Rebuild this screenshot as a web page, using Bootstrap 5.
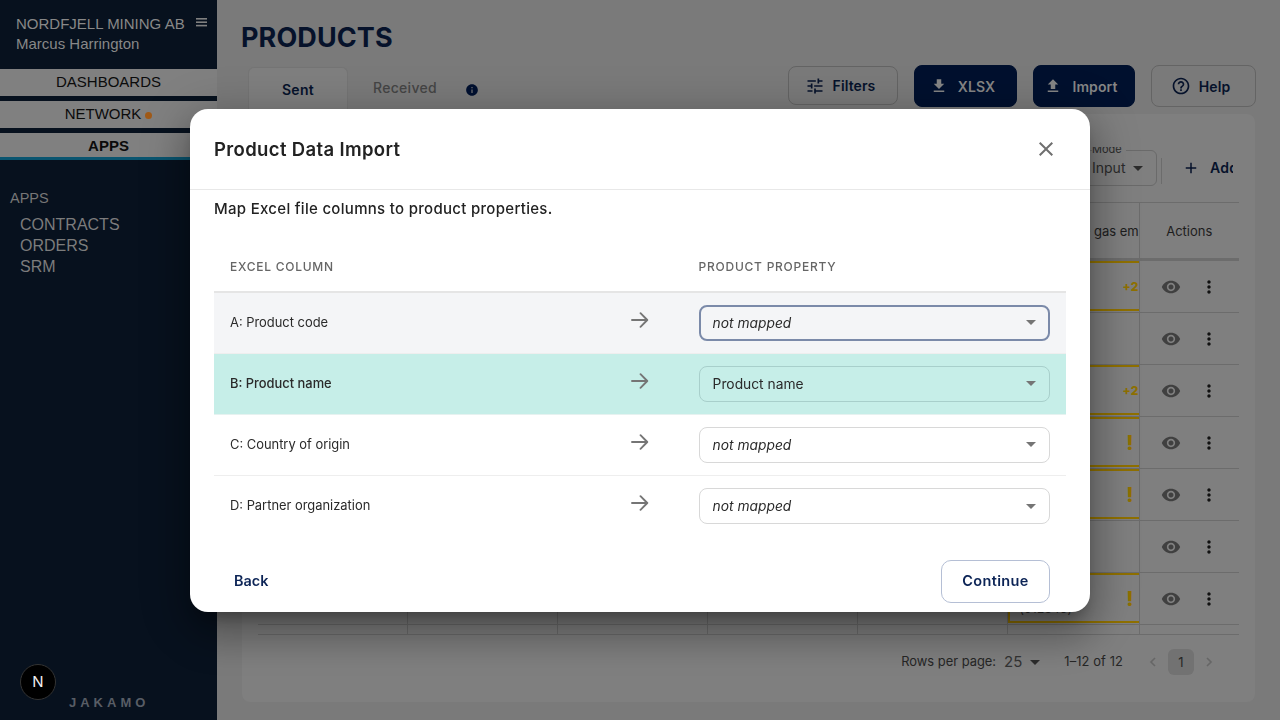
<!DOCTYPE html>
<html lang="en">
<head>
<meta charset="utf-8">
<title>Products</title>
<link href="https://cdn.jsdelivr.net/npm/bootstrap@5.3.0/dist/css/bootstrap.min.css" rel="stylesheet">
<style>
html,body{height:720px;overflow:hidden}
body{font-family:"Inter","Liberation Sans",sans-serif;background:#7a7a7a;color:#1d1d1d}
.heading-font{font-family:"Inter","Open Sans",sans-serif}
.shell{height:720px}
.side{width:217px;flex:0 0 217px;background:#07111e;font-family:"Liberation Sans",sans-serif;color:#888}
.side-head{height:69px;padding:14px 10px 0 16px;font-size:15px;line-height:20px}
.side-head .who{font-size:15px;line-height:20px}
.burger{width:11px;height:9px;margin-top:4px;fill:#808080;flex:none}
.side-nav{height:27px;background:#808080;color:#0b0b0b;font-size:15px;line-height:25px;text-align:center;margin-bottom:5px}
.side-nav.on{height:27px;font-weight:700;margin-bottom:0;border-bottom:3px solid #0a5570;line-height:25px}
.alert-dot{display:inline-block;width:7px;height:7px;border-radius:50%;background:#a05a18;margin-left:4px}
.side-title{margin:29px 0 0 10px;font-size:14.5px;line-height:18px;color:#767676}
.side-links{margin:7px 0 0 20px;font-size:16px;line-height:21px;color:#7c7c7c}
.brand-mark{margin:auto 0 10px 69px;font-size:13px;line-height:14px;letter-spacing:4px;color:#585d65;font-weight:700}
.dev-dot{position:absolute;left:20px;top:664px;width:36px;height:36px;border-radius:50%;background:#000;border:1px solid #333;color:#eee;font-size:15px;line-height:34px;text-align:center}
.main-area{padding:23px 24px 18px 24px;min-width:0}
.page-title{font-size:27px;line-height:30px;font-weight:700;color:#06122b;margin:0;letter-spacing:.1px}
.tabs-row{height:49px;margin:12px 0 0 1px}
.tab-on{width:100px;height:47px;margin:2px 25px 0 6px;background:#7f7f7f;border:1px solid #757575;border-bottom:0;border-radius:6px 6px 0 0;font-size:14px;font-weight:600;color:#06122b;line-height:44px;text-align:center;letter-spacing:.3px}
.tab-off{font-size:14px;font-weight:500;color:#454545;line-height:44px;margin-top:1px;letter-spacing:.3px}
.tab-info{width:14px;height:14px;fill:#001030;margin:0 0 0 28px}
.tool-btn{height:42px;border-radius:8px;font-size:14px;font-weight:600;padding:0 6px 0 0;display:inline-flex;align-items:center;justify-content:center;gap:8px;border:1px solid #646464;color:#06122b;background:transparent;letter-spacing:.1px}
.tool-btn svg{width:20px;height:20px;fill:currentColor}
.tool-btn.solid{background:#00102e;border-color:#00102e;color:#858585;gap:10px}
.tool-btn.solid svg{width:18px;height:18px}
.tool-btn.short{height:39px;margin-top:1px}
.w-filter{width:110px}.w-xlsx{width:103px}.w-import{width:102px}.w-help{width:105px}
.tool-gap{gap:16px;margin-top:0}
.sheet{height:588px;margin:0 1px;background:#7f7f7f;border-radius:8px;padding:33px 16px 0 16px}
.sheet-tools{height:55px;padding:3px 6px 0 0;overflow:hidden}
.mode-box{position:relative;width:130px;height:36px;border:1px solid #6a6a6a;border-radius:6px;font-size:14px;color:#2b2b2b;line-height:34px;padding-left:64px}
.mode-box .legend{position:absolute;left:64px;top:-9px;font-size:11px;line-height:14px;background:#7f7f7f;padding:0 4px 0 0;color:#2b2b2b}
.mini-caret{display:inline-block;width:0;height:0;border-left:5px solid transparent;border-right:5px solid transparent;border-top:5px solid #2c2c2c;vertical-align:2px;margin-left:8px}
.tool-sep{width:1px;height:26px;background:#6c6c6c;margin:8px 0 0 4px}
.add-clip{flex:0 0 48px;margin-left:23px;height:36px;overflow:hidden;white-space:nowrap;color:#06122b;font-weight:600;font-size:14px;line-height:36px;letter-spacing:.3px}
.add-clip svg{width:18px;height:18px;fill:currentColor;margin:-3px 10px 0 -3px;vertical-align:middle}
.grid-wrap{--bs-table-bg:transparent;--bs-table-color:#1d1d1d;table-layout:fixed;width:981px;margin:0;border-top:1px solid #6c6c6c}
.grid-wrap th,.grid-wrap td{border:0;border-right:1px solid #6c6c6c;border-bottom:1px solid #6c6c6c;padding:0;vertical-align:middle;background:transparent;box-shadow:none}
.grid-wrap th:last-child,.grid-wrap td:last-child{border-right:0}
.grid-wrap thead th{height:57px;padding-top:3px;border-bottom:3px solid #6c6c6c;font-size:13px;font-weight:400;white-space:nowrap;overflow:hidden}
.grid-wrap tbody tr{height:52px}
.grid-wrap tbody tr.stub{height:10px}
.grid-wrap tr.stub td{height:10px}
.flag-box{height:50px;border-top:2px solid #8f7000;border-bottom:2px solid #8f7000;color:#8f7000;font-weight:800;font-size:12px;display:flex;align-items:center;justify-content:flex-end;padding:2px 0 0 0;margin-bottom:1px;letter-spacing:.2px}
.flag-box.lined{border-left:2px solid #8f7000;position:relative}
.flag-box .bang{font-size:20px;font-weight:800;padding-right:5px}
.code-peek{position:absolute;left:10px;bottom:3px;font-weight:400;font-size:12px;color:#2b2b2b}
.act-cell{display:flex;align-items:center;padding-left:21px;gap:18px}
.act-cell svg{width:20px;height:20px;fill:#404040}
.act-cell svg.dots{fill:#111}
.pager{height:52px;margin-top:1px;font-size:12.9px;color:#262626;padding-right:20px}
.pager .pg-n{font-size:15px;color:#333}
.pg-range{margin-right:20px;letter-spacing:.1px}
.pg-cur{width:26px;height:26px;border-radius:6px;background:#727272;text-align:center;line-height:26px;font-size:13px;margin:0 5px}
.pg-ch{width:20px;height:20px;fill:none;stroke:#666;stroke-width:1.6}
.modal-shell{max-width:900px;margin:0 auto;min-height:720px}
.sheet-modal{border:0;border-radius:18px;box-shadow:0 11px 15px -7px rgba(0,0,0,.3),0 24px 38px 3px rgba(0,0,0,.2),0 9px 46px 8px rgba(0,0,0,.2);height:503px;color:#1f1f1f}
.sheet-modal .modal-header{height:81px;padding:1px 24px 0;border-bottom:1px solid #e8e8e8}
.sheet-modal .modal-title{font-size:18.5px;font-weight:600;color:#222;line-height:28px;letter-spacing:.35px}
.x-btn{background:none;border:0;padding:0;width:24px;height:24px;margin-right:8px;line-height:0}
.x-btn svg{width:24px;height:24px;fill:#6f6f6f}
.lead-text{font-size:15px;font-weight:500;line-height:22px;margin:8px 24px 0;color:#222;letter-spacing:.3px}
.map-table{--bs-table-bg:transparent;table-layout:fixed;width:852px;margin:21px 24px 0;border-collapse:separate;border-spacing:0}
.map-table th{height:52px;border-bottom:2px solid #e5e5e5;padding:2px 16px 0;font-size:12px;font-weight:500;letter-spacing:.75px;color:#666;vertical-align:middle;text-transform:uppercase}
.map-table td{height:61px;padding:0 16px;font-size:12.9px;vertical-align:middle;border-bottom:1px solid #eee;color:#2a2a2a;box-shadow:none}
.map-table tr.row-focus td{background:#f4f5f7}
.map-table tr.row-hit td{background:#c6eee8;border-bottom-color:#e6f2f0;font-weight:500}
.map-table tr:last-child td{border-bottom:0}
.map-arrow{width:20px;height:20px;fill:none;stroke:#757575;stroke-width:1.9;stroke-linecap:round;stroke-linejoin:round;display:block;margin:-6px auto 0}
.map-select{height:36px;font-size:13.8px;padding:1px 30px 0 13px;border:1px solid #d8d8d8;border-radius:8px;background-color:#fff;color:#2a2a2a;background-position:right 13px center;background-size:10px 5px;background-image:url("data:image/svg+xml,%3Csvg xmlns='http://www.w3.org/2000/svg' viewBox='0 0 10 5'%3E%3Cpath d='M0 0h10L5 5z' fill='%23757575'/%3E%3C/svg%3E")}
.map-select.empty{font-style:italic}
.map-select.focused{border:2px solid #7b8aa9;background-color:#f4f5f7;padding-left:12px;background-position:right 12px center}
.map-select.hit{background-color:#c6eee8;border-color:#a8cfcb}
.foot-row{margin:23px 40px 0 44px}
.back-link{font-size:14.4px;font-weight:600;color:#0c2456;text-decoration:none}
.next-btn{width:109px;height:43px;border:1px solid #b5bfd5;border-radius:10px;background:#fff;font-size:14.5px;font-weight:600;color:#0c2456;padding:0;letter-spacing:.35px}
</style>
</head>
<body>
<div class="shell d-flex">
  <aside class="side d-flex flex-column">
    <div class="side-head d-flex justify-content-between">
      <div><div class="text-nowrap">NORDFJELL MINING AB</div><div class="who">Marcus Harrington</div></div>
      <svg class="burger" viewBox="0 0 11 9"><rect width="11" height="1.6"/><rect y="3.4" width="11" height="1.6"/><rect y="6.8" width="11" height="1.6"/></svg>
    </div>
    <div class="side-nav">DASHBOARDS</div>
    <div class="side-nav">NETWORK<span class="alert-dot"></span></div>
    <div class="side-nav on">APPS</div>
    <div class="side-title">APPS</div>
    <div class="side-links"><div>CONTRACTS</div><div>ORDERS</div><div>SRM</div></div>
    <div class="brand-mark">JAKAMO</div>
  </aside>
  <main class="main-area flex-grow-1">
    <h1 class="page-title heading-font">PRODUCTS</h1>
    <div class="tabs-row d-flex justify-content-between">
      <div class="d-flex align-items-start">
        <div class="tab-on heading-font">Sent</div>
        <div class="tab-off heading-font">Received</div>
        <svg class="tab-info align-self-center" viewBox="0 0 24 24"><path d="M12 2C6.48 2 2 6.48 2 12s4.48 10 10 10 10-4.48 10-10S17.52 2 12 2zm1 15h-2v-6h2v6zm0-8h-2V7h2v2z"/></svg>
      </div>
      <div class="d-flex tool-gap align-items-start heading-font">
        <button class="tool-btn short w-filter"><svg viewBox="0 0 24 24"><path d="M3 17v2h6v-2H3zM3 5v2h10V5H3zm10 16v-2h8v-2h-8v-2h-2v6h2zM7 9v2H3v2h4v2h2V9H7zm14 4v-2H11v2h10zm-6-4h2V7h4V5h-4V3h-2v6z"/></svg>Filters</button>
        <button class="tool-btn solid w-xlsx"><svg viewBox="0 0 24 24"><path d="M19 9h-4V3H9v6H5l7 7 7-7zM5 18v2h14v-2H5z"/></svg>XLSX</button>
        <button class="tool-btn solid w-import"><svg viewBox="0 0 24 24"><path d="M9 16h6v-6h4l-7-7-7 7h4zm-4 2h14v2H5z"/></svg>Import</button>
        <button class="tool-btn w-help"><svg viewBox="0 0 24 24"><path d="M11 18h2v-2h-2v2zm1-16C6.48 2 2 6.48 2 12s4.48 10 10 10 10-4.48 10-10S17.52 2 12 2zm0 18c-4.41 0-8-3.59-8-8s3.59-8 8-8 8 3.59 8 8-3.59 8-8 8zm0-14c-2.21 0-4 1.79-4 4h2c0-1.1.9-2 2-2s2 .9 2 2c0 2-3 1.75-3 5h2c0-2.25 3-2.5 3-5 0-2.21-1.79-4-4-4z"/></svg>Help</button>
      </div>
    </div>
    <section class="sheet">
      <div class="sheet-tools d-flex justify-content-end">
        <div class="mode-box"><span class="legend">Mode</span>Input<span class="mini-caret"></span></div>
        <div class="tool-sep"></div>
        <div class="add-clip heading-font"><svg viewBox="0 0 24 24"><path d="M19 13h-6v6h-2v-6H5v-2h6V5h2v6h6v2z"/></svg>Add product</div>
      </div>
      <table class="table grid-wrap">
        <colgroup><col style="width:149px"><col style="width:150px"><col style="width:150px"><col style="width:150px"><col style="width:150px"><col style="width:132px"><col></colgroup>
        <thead><tr><th></th><th></th><th></th><th></th><th></th><th class="ps-2">Greenhouse gas emissions</th><th class="text-center">Actions</th></tr></thead>
        <tbody>
          <tr><td></td><td></td><td></td><td></td><td></td><td><div class="flag-box">+2</div></td><td><div class="act-cell"><svg viewBox="0 0 24 24"><path d="M12 4.500C7 4.500 2.730 7.610 1 12c1.730 4.390 6 7.500 11 7.500s9.270-3.110 11-7.500c-1.730-4.390-6-7.500-11-7.500zM12 17c-2.760 0-5-2.240-5-5s2.240-5 5-5 5 2.240 5 5-2.240 5-5 5zm0-8c-1.660 0-3 1.340-3 3s1.340 3 3 3 3-1.340 3-3-1.340-3-3-3z"/></svg><svg class="dots" viewBox="0 0 24 24"><path d="M12 8c1.100 0 2-.9 2-2s-.9-2-2-2-2 .9-2 2 .9 2 2 2zm0 2c-1.100 0-2 .9-2 2s.9 2 2 2 2-.9 2-2-.9-2-2-2zm0 6c-1.100 0-2 .9-2 2s.9 2 2 2 2-.9 2-2-.9-2-2-2z"/></svg></div></td></tr>
          <tr><td></td><td></td><td></td><td></td><td></td><td></td><td><div class="act-cell"><svg viewBox="0 0 24 24"><path d="M12 4.500C7 4.500 2.730 7.610 1 12c1.730 4.390 6 7.500 11 7.500s9.270-3.110 11-7.500c-1.730-4.390-6-7.500-11-7.500zM12 17c-2.760 0-5-2.240-5-5s2.240-5 5-5 5 2.240 5 5-2.240 5-5 5zm0-8c-1.660 0-3 1.340-3 3s1.340 3 3 3 3-1.340 3-3-1.340-3-3-3z"/></svg><svg class="dots" viewBox="0 0 24 24"><path d="M12 8c1.100 0 2-.9 2-2s-.9-2-2-2-2 .9-2 2 .9 2 2 2zm0 2c-1.100 0-2 .9-2 2s.9 2 2 2 2-.9 2-2-.9-2-2-2zm0 6c-1.100 0-2 .9-2 2s.9 2 2 2 2-.9 2-2-.9-2-2-2z"/></svg></div></td></tr>
          <tr><td></td><td></td><td></td><td></td><td></td><td><div class="flag-box">+2</div></td><td><div class="act-cell"><svg viewBox="0 0 24 24"><path d="M12 4.500C7 4.500 2.730 7.610 1 12c1.730 4.390 6 7.500 11 7.500s9.270-3.110 11-7.500c-1.730-4.390-6-7.500-11-7.500zM12 17c-2.760 0-5-2.240-5-5s2.240-5 5-5 5 2.240 5 5-2.240 5-5 5zm0-8c-1.660 0-3 1.340-3 3s1.340 3 3 3 3-1.340 3-3-1.340-3-3-3z"/></svg><svg class="dots" viewBox="0 0 24 24"><path d="M12 8c1.100 0 2-.9 2-2s-.9-2-2-2-2 .9-2 2 .9 2 2 2zm0 2c-1.100 0-2 .9-2 2s.9 2 2 2 2-.9 2-2-.9-2-2-2zm0 6c-1.100 0-2 .9-2 2s.9 2 2 2 2-.9 2-2-.9-2-2-2z"/></svg></div></td></tr>
          <tr><td></td><td></td><td></td><td></td><td></td><td><div class="flag-box"><span class="bang">!</span></div></td><td><div class="act-cell"><svg viewBox="0 0 24 24"><path d="M12 4.500C7 4.500 2.730 7.610 1 12c1.730 4.390 6 7.500 11 7.500s9.270-3.110 11-7.500c-1.730-4.390-6-7.500-11-7.500zM12 17c-2.760 0-5-2.240-5-5s2.240-5 5-5 5 2.240 5 5-2.240 5-5 5zm0-8c-1.660 0-3 1.340-3 3s1.340 3 3 3 3-1.340 3-3-1.340-3-3-3z"/></svg><svg class="dots" viewBox="0 0 24 24"><path d="M12 8c1.100 0 2-.9 2-2s-.9-2-2-2-2 .9-2 2 .9 2 2 2zm0 2c-1.100 0-2 .9-2 2s.9 2 2 2 2-.9 2-2-.9-2-2-2zm0 6c-1.100 0-2 .9-2 2s.9 2 2 2 2-.9 2-2-.9-2-2-2z"/></svg></div></td></tr>
          <tr><td></td><td></td><td></td><td></td><td></td><td><div class="flag-box"><span class="bang">!</span></div></td><td><div class="act-cell"><svg viewBox="0 0 24 24"><path d="M12 4.500C7 4.500 2.730 7.610 1 12c1.730 4.390 6 7.500 11 7.500s9.270-3.110 11-7.500c-1.730-4.390-6-7.500-11-7.500zM12 17c-2.760 0-5-2.240-5-5s2.240-5 5-5 5 2.240 5 5-2.240 5-5 5zm0-8c-1.660 0-3 1.340-3 3s1.340 3 3 3 3-1.340 3-3-1.340-3-3-3z"/></svg><svg class="dots" viewBox="0 0 24 24"><path d="M12 8c1.100 0 2-.9 2-2s-.9-2-2-2-2 .9-2 2 .9 2 2 2zm0 2c-1.100 0-2 .9-2 2s.9 2 2 2 2-.9 2-2-.9-2-2-2zm0 6c-1.100 0-2 .9-2 2s.9 2 2 2 2-.9 2-2-.9-2-2-2z"/></svg></div></td></tr>
          <tr><td></td><td></td><td></td><td></td><td></td><td></td><td><div class="act-cell"><svg viewBox="0 0 24 24"><path d="M12 4.500C7 4.500 2.730 7.610 1 12c1.730 4.390 6 7.500 11 7.500s9.270-3.110 11-7.500c-1.730-4.390-6-7.500-11-7.500zM12 17c-2.760 0-5-2.240-5-5s2.240-5 5-5 5 2.240 5 5-2.240 5-5 5zm0-8c-1.660 0-3 1.340-3 3s1.340 3 3 3 3-1.340 3-3-1.340-3-3-3z"/></svg><svg class="dots" viewBox="0 0 24 24"><path d="M12 8c1.100 0 2-.9 2-2s-.9-2-2-2-2 .9-2 2 .9 2 2 2zm0 2c-1.100 0-2 .9-2 2s.9 2 2 2 2-.9 2-2-.9-2-2-2zm0 6c-1.100 0-2 .9-2 2s.9 2 2 2 2-.9 2-2-.9-2-2-2z"/></svg></div></td></tr>
          <tr><td></td><td></td><td></td><td></td><td></td><td><div class="flag-box lined"><span class="code-peek">(012345)</span><span class="bang">!</span></div></td><td><div class="act-cell"><svg viewBox="0 0 24 24"><path d="M12 4.500C7 4.500 2.730 7.610 1 12c1.730 4.390 6 7.500 11 7.500s9.270-3.110 11-7.500c-1.730-4.390-6-7.500-11-7.500zM12 17c-2.760 0-5-2.240-5-5s2.240-5 5-5 5 2.240 5 5-2.240 5-5 5zm0-8c-1.660 0-3 1.340-3 3s1.340 3 3 3 3-1.340 3-3-1.340-3-3-3z"/></svg><svg class="dots" viewBox="0 0 24 24"><path d="M12 8c1.100 0 2-.9 2-2s-.9-2-2-2-2 .9-2 2 .9 2 2 2zm0 2c-1.100 0-2 .9-2 2s.9 2 2 2 2-.9 2-2-.9-2-2-2zm0 6c-1.100 0-2 .9-2 2s.9 2 2 2 2-.9 2-2-.9-2-2-2z"/></svg></div></td></tr>
          <tr class="stub"><td></td><td></td><td></td><td></td><td></td><td></td><td></td></tr>
        </tbody>
      </table>
      <div class="pager d-flex align-items-center justify-content-end">
        <span class="me-2">Rows per page:</span><span class="pg-n">25</span><span class="mini-caret me-4"></span>
        <span class="pg-range">1–12 of 12</span>
        <svg class="pg-ch" viewBox="0 0 20 20"><path d="M12 6l-4 4 4 4"/></svg>
        <span class="pg-cur">1</span>
        <svg class="pg-ch" viewBox="0 0 20 20"><path d="M8 6l4 4-4 4"/></svg>
      </div>
    </section>
  </main>
</div>
<div class="dev-dot">N</div>
<div class="modal d-block" tabindex="-1" role="dialog" aria-modal="true">
  <div class="modal-dialog modal-dialog-centered modal-shell">
    <div class="modal-content sheet-modal">
      <div class="modal-header">
        <h5 class="modal-title heading-font">Product Data Import</h5>
        <button class="x-btn" aria-label="Close"><svg viewBox="0 0 24 24"><path d="M19 6.41 17.59 5 12 10.59 6.41 5 5 6.41 10.59 12 5 17.59 6.41 19 12 13.41 17.59 19 19 17.59 13.41 12z"/></svg></button>
      </div>
      <p class="lead-text heading-font">Map Excel file columns to product properties.</p>
      <table class="table map-table">
        <colgroup><col style="width:45%"><col style="width:10%"><col style="width:45%"></colgroup>
        <thead><tr><th>Excel column</th><th></th><th>Product property</th></tr></thead>
        <tbody>
          <tr class="row-focus"><td>A: Product code</td><td><svg class="map-arrow" viewBox="0 0 20 20"><path d="M2 10h15M10.500 3.200 17.300 10l-6.800 6.800"/></svg></td><td><select class="form-select map-select empty focused"><option>not mapped</option></select></td></tr>
          <tr class="row-hit"><td>B: Product name</td><td><svg class="map-arrow" viewBox="0 0 20 20"><path d="M2 10h15M10.500 3.200 17.300 10l-6.800 6.800"/></svg></td><td><select class="form-select map-select hit"><option>Product name</option></select></td></tr>
          <tr><td>C: Country of origin</td><td><svg class="map-arrow" viewBox="0 0 20 20"><path d="M2 10h15M10.500 3.200 17.300 10l-6.800 6.800"/></svg></td><td><select class="form-select map-select empty"><option>not mapped</option></select></td></tr>
          <tr><td>D: Partner organization</td><td><svg class="map-arrow" viewBox="0 0 20 20"><path d="M2 10h15M10.500 3.200 17.300 10l-6.800 6.800"/></svg></td><td><select class="form-select map-select empty"><option>not mapped</option></select></td></tr>
        </tbody>
      </table>
      <div class="foot-row d-flex justify-content-between align-items-center heading-font">
        <a class="back-link" href="#">Back</a>
        <button class="next-btn">Continue</button>
      </div>
    </div>
  </div>
</div>
<script src="https://cdn.jsdelivr.net/npm/bootstrap@5.3.0/dist/js/bootstrap.bundle.min.js"></script>
</body>
</html>
